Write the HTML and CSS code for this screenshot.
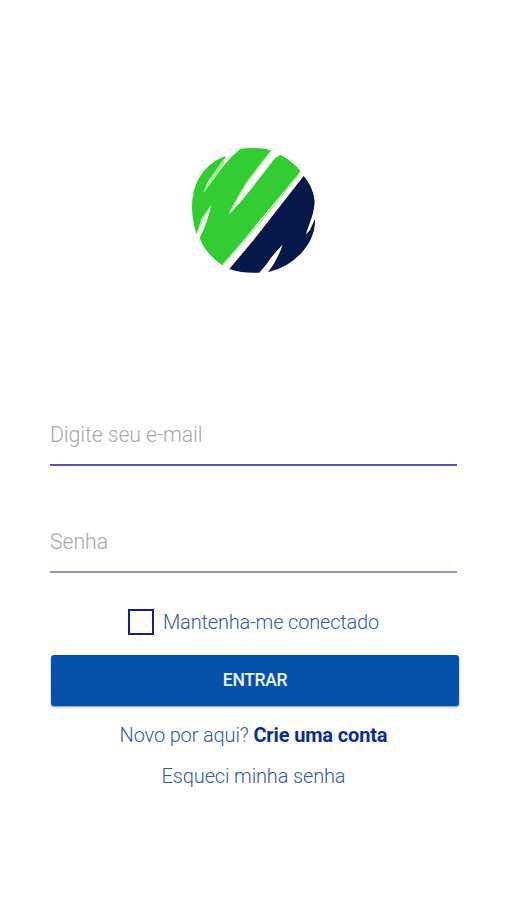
FILE: index.html
```
<!DOCTYPE html>
<html lang="pt-BR">
<head>
    <meta charset="UTF-8">
    <meta name="viewport" content="width=device-width, initial-scale=1.0">
    <title>Entrar</title>
    <link rel="stylesheet" href="styles.css">
</head>
<body>

    <div class="container">
        <svg class="logo" viewBox="0 0 450 438" aria-hidden="true">
            <!-- green side -->
            <path class="green" d="M138 54 Q114 60 84 86 C43 124 31 178 38 236 Q41 264 49 288 L53 285 L59 301 Q78 349 127 382 L362 100 Q338 69 301 50 L285 61 L215 151 Q184 193 145 231 L160 200 L200 132 L274 38 L261 33 Q220 28 181 32 Q151 57 130 84 L70 165 L83 132 Z"/>
            <path class="gap" d="M94 200 Q83 252 59 300 L50 289 L64 243 Z"/>
            <path class="scratch" d="M138 58 L110 96 L72 161 M133 70 L92 132 M271 41 L230 94 L196 140 L150 221 M360 104 L248 244 L129 379 M90 207 L67 245 L51 284"/>
            <!-- blue side -->
            <path class="navy" d="M371 114 Q399 144 404 190 Q402 223 391 250 L377 290 L390 276 L405 242 C407 282 389 319 362 347 Q323 389 264 403 Q292 367 308 320 Q276 352 260 378 L238 404 Q191 407 148 393 L219 308 Z"/>
        </svg>

        <form class="login">
            <input class="field" type="email" placeholder="Digite seu e-mail" aria-label="E-mail">
            <input class="field field-password" type="password" placeholder="Senha" aria-label="Senha">

            <label class="remember">
                <input type="checkbox">
                <span>Mantenha-me conectado</span>
            </label>

            <button type="button">ENTRAR</button>
        </form>

        <p class="signup">Novo por aqui? <a href="#">Crie uma conta</a></p>
        <p class="forgot"><a href="#">Esqueci minha senha</a></p>
    </div>

</body>
</html>
```

FILE: styles.css
```
* {
    box-sizing: border-box;
}
body {
    margin: 0;
    font-family: Roboto, sans-serif;
    font-weight: 300;
    background-color: #fff;
    color: #3458aa;
}
.container {
    padding: 138px 49px 0 50px;
    text-align: center;
}
.logo {
    display: block;
    width: 150px;
    height: 146px;
    margin-left: 130px;
}
.green {
    fill: #33cc33;
}
.gap {
    fill: #fff;
}
.scratch {
    fill: none;
    stroke: #9cec8c;
    stroke-width: 4;
}
.navy {
    fill: #06184a;
}
.login {
    margin-top: 122px;
}
.field {
    display: block;
    width: 407px;
    height: 60px;
    padding: 0 0 2px;
    border: none;
    border-bottom: 2px solid #5656ae;
    border-radius: 0;
    background: none;
    font: 300 21.3px Roboto, sans-serif;
    letter-spacing: -0.1px;
    color: #3458aa;
    outline: none;
}
.field::placeholder {
    color: #a9a9a9;
    opacity: 1;
}
.field-password {
    margin-top: 47px;
    border-bottom-color: #9696c5;
}
.remember {
    display: flex;
    align-items: center;
    height: 26px;
    margin: 36px 0 0 78px;
    font-size: 20px;
    letter-spacing: -0.18px;
}
.remember input {
    appearance: none;
    width: 26px;
    height: 26px;
    margin: 0 9px 0 0;
    border: 2px solid #151b91;
}
button {
    display: block;
    width: 408px;
    height: 51px;
    margin: 20px 0 0 1px;
    padding: 0 0 1px;
    border: none;
    border-radius: 3px;
    background-color: #0652aa;
    box-shadow: 0 1px 2px rgba(6, 82, 170, 0.6);
    color: #f0f2ff;
    font: 500 17.5px Roboto, sans-serif;
    letter-spacing: -0.35px;
    cursor: pointer;
}
p {
    margin: 0;
    font-size: 20px;
    line-height: 24px;
    letter-spacing: -0.15px;
}
a {
    color: inherit;
    text-decoration: none;
}
.signup {
    margin-top: 17px;
}
.signup a {
    color: #0a2b9b;
    font-weight: 700;
}
.forgot {
    margin-top: 17px;
}
```
